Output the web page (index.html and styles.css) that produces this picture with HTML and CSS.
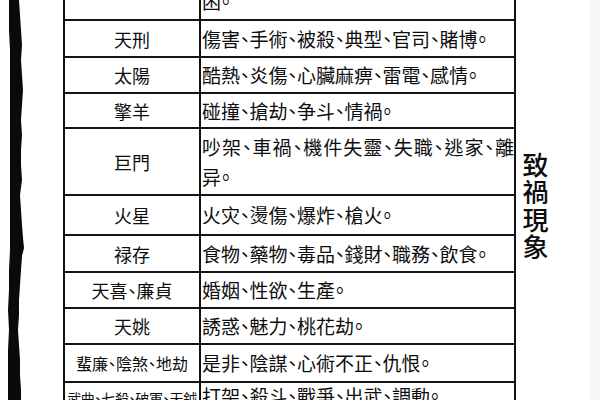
FILE: index.html
```html
<!DOCTYPE html>
<html lang="zh-Hant">
<head>
<meta charset="utf-8">
<title>致禍現象</title>
<link rel="stylesheet" href="styles.css">
</head>
<body>
<div class="page">
  <svg class="strip" width="26" height="400" viewBox="0 0 26 400" aria-hidden="true">
    <polygon fill="#0a0a0a" points="19,0 20,15 21,30 22,45 21,60 22,75 23,90 22,105 21,120 22,135 21,150 21,165 22,180 20,195 21,210 22,225 23,238 24,248 22,256 21,270 20,285 19,300 19,315 18,330 19,345 20,360 20,375 21,390 21,400 8,400 8,385 8,370 8,350 9,330 8,310 9,290 9,270 10,250 10,230 10,210 10,190 10,170 10,150 10,130 10,110 10,90 10,70 10,50 9,30 9,15 9,0"/>
  </svg>

  <div class="table">
    <div class="row r-top">
      <div class="name"></div>
      <div class="desc desc-bottom">困。</div>
    </div>
    <div class="row h37">
      <div class="name">天刑</div>
      <div class="desc">傷害、手術、被殺、典型、官司、賭博。</div>
    </div>
    <div class="row h36">
      <div class="name">太陽</div>
      <div class="desc">酷熱、炎傷、心臟麻痹、雷電、感情。</div>
    </div>
    <div class="row h35">
      <div class="name">擎羊</div>
      <div class="desc">碰撞、搶劫、争斗、情禍。</div>
    </div>
    <div class="row h67">
      <div class="name">巨門</div>
      <div class="desc desc-stack">
        <span class="just">吵架、車禍、機件失靈、失職、逃家、離</span>
        <span>异。</span>
      </div>
    </div>
    <div class="row h40">
      <div class="name">火星</div>
      <div class="desc">火灾、燙傷、爆炸、槍火。</div>
    </div>
    <div class="row h37">
      <div class="name">禄存</div>
      <div class="desc">食物、藥物、毒品、錢財、職務、飲食。</div>
    </div>
    <div class="row h36">
      <div class="name">天喜、廉貞</div>
      <div class="desc">婚姻、性欲、生產。</div>
    </div>
    <div class="row h36">
      <div class="name">天姚</div>
      <div class="desc">誘惑、魅力、桃花劫。</div>
    </div>
    <div class="row h38">
      <div class="name name-sm">蜚廉、陰煞、地劫</div>
      <div class="desc">是非、陰謀、心術不正、仇恨。</div>
    </div>
    <div class="row r-last">
      <div class="name name-xs">武曲、七殺、破軍、天鉞</div>
      <div class="desc">打架、殺斗、戰爭、出武、調動。</div>
    </div>
  </div>

  <div class="side">
    <div class="label">致禍現象</div>
  </div>
</div>
</body>
</html>
```

FILE: styles.css
```css
* {
  box-sizing: border-box;
}

html, body {
  margin: 0;
  padding: 0;
  background: #ffffff;
}

body {
  font-family: "Noto Sans CJK SC", "Noto Sans CJK TC", "Noto Sans CJK JP", sans-serif;
  color: #0d0d0d;
  font-feature-settings: "halt" 1;
}

.page {
  display: flex;
  align-items: flex-start;
  width: 600px;
  height: 400px;
  overflow: hidden;
  background: linear-gradient(to right, #ffffff 0, #ffffff 590px, #f7f7f7 590px, #f7f7f7 600px);
}

.strip {
  flex: none;
  display: block;
}

.table {
  flex: none;
  width: 453px;
  margin-left: 37px;
  margin-top: -21px;
  border-left: 2px solid #111;
  border-right: 2px solid #111;
}

.row {
  display: grid;
  grid-template-columns: 136px 313px;
  border-bottom: 2px solid #151515;
  height: 36px;
}

.r-top { height: 42px; }
.h35 { height: 35px; }
.h36 { height: 36px; }
.h37 { height: 37px; }
.h38 { height: 38px; }
.h40 { height: 40px; }
.h67 { height: 67px; }
.r-last { height: 47px; border-bottom: none; }

.name {
  border-right: 2px solid #111;
  display: flex;
  align-items: center;
  justify-content: center;
  font-size: 18px;
  line-height: 24px;
  white-space: nowrap;
}

.name-sm {
  font-size: 16px;
}

.name-xs {
  font-size: 14px;
  letter-spacing: -0.3px;
}

.desc {
  display: flex;
  align-items: center;
  padding-left: 1px;
  font-size: 19px;
  line-height: 30px;
  white-space: nowrap;
}

.desc-bottom {
  align-items: flex-end;
  padding-bottom: 3px;
}

.desc-stack {
  flex-direction: column;
  align-items: stretch;
  justify-content: center;
}

.just {
  display: block;
  text-align: justify;
  text-align-last: justify;
}

.r-last .name,
.r-last .desc {
  align-items: flex-start;
}

.r-last .name {
  padding-top: 3px;
}

.r-last .desc {
  line-height: 26px;
  padding-top: 0;
}

.side {
  flex: none;
  padding-left: 6px;
  padding-top: 152px;
}

.label {
  writing-mode: vertical-rl;
  font-size: 26px;
  line-height: 26px;
  letter-spacing: 1.5px;
  font-weight: 500;
}
```
